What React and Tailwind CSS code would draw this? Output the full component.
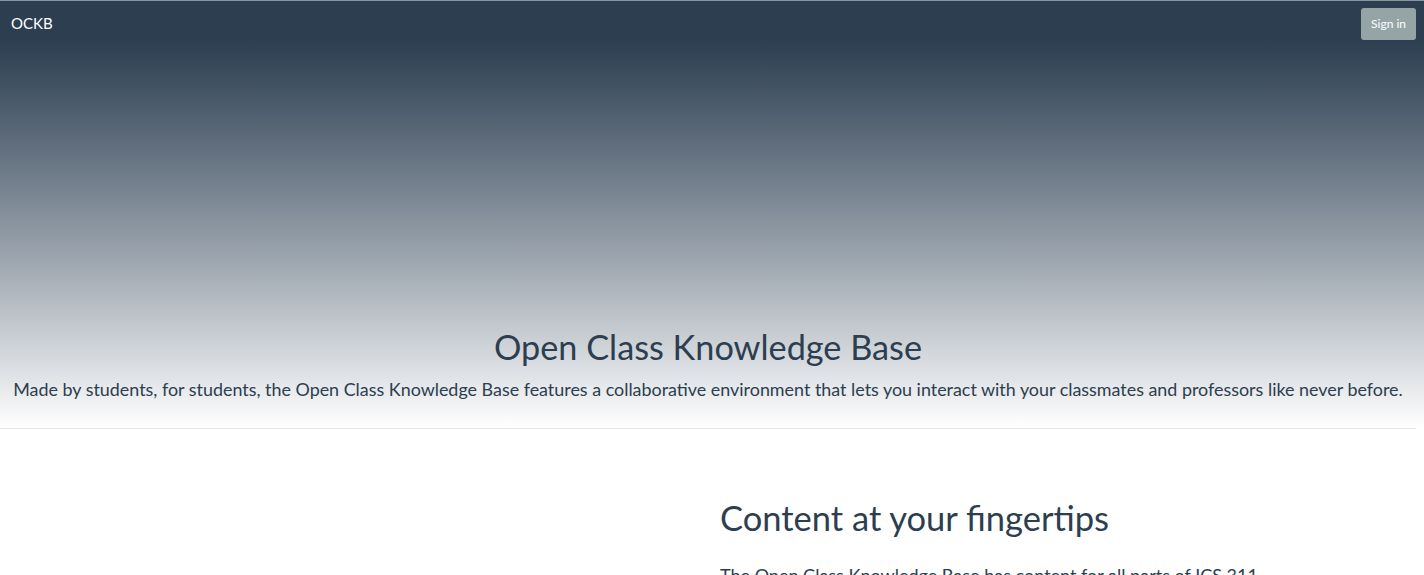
const App = () => {
  return (
    <div className="min-h-screen bg-white font-['Lato','Open_Sans',sans-serif] text-[#2c3e50]">
      {/* HERO */}
      <div className="bg-gradient-to-b from-[#2c3e50] from-[9%] to-white border-t border-[#8796a5]">
        <nav className="flex items-center justify-between pl-[11px] pr-2 h-[45px]">
          <span className="text-white text-[15px]">OCKB</span>
          <button className="bg-[#95a5a6] text-white text-[12px] px-[10px] py-[10px] rounded-[3px] leading-none">
            Sign in
          </button>
        </nav>

        <div className="flex flex-col items-center pt-[280px] pb-[25px] mr-2">
          <h1 className="text-[34.25px] leading-tight">Open Class Knowledge Base</h1>
          <p className="text-[17.9px] mt-[7px]">
            Made by students, for students, the Open Class Knowledge Base features a collaborative environment that lets you interact with your classmates and professors like never before.
          </p>
        </div>
      </div>

      <hr className="border-t border-[#e5e7eb] mr-2" />

      {/* CONTENT */}
      <div className="grid grid-cols-2">
        <div></div>
        <div className="pl-2 pt-[67px]">
          <h2 className="text-[34.5px] leading-tight">Content at your fingertips</h2>
          <p className="text-[18px] mt-[23px]">
            The Open Class Knowledge Base has content for all parts of ICS 311.
          </p>
        </div>
      </div>
    </div>
  );
};

export default App;
